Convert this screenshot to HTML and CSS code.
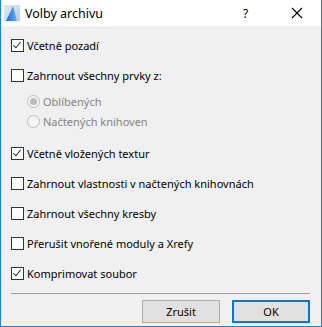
FILE: index.html
```html
<!DOCTYPE html>
<html lang="cs">
<head>
<meta charset="UTF-8">
<title>Volby archivu</title>
<link rel="stylesheet" href="styles.css">
</head>
<body>
<div class="dialog">
  <div class="titlebar">
    <svg class="app-icon" width="16" height="16" viewBox="0 0 16 16">
      <defs>
        <linearGradient id="bg" x1="0" y1="0" x2="1" y2="1">
          <stop offset="0" stop-color="#dfe9f6"/>
          <stop offset="1" stop-color="#b9cde6"/>
        </linearGradient>
        <linearGradient id="sail" x1="0" y1="0" x2="1" y2="0">
          <stop offset="0" stop-color="#1c6fd8"/>
          <stop offset="1" stop-color="#6aa8f0"/>
        </linearGradient>
      </defs>
      <rect x="0" y="0" width="16" height="16" fill="url(#bg)"/>
      <path d="M2 16 L9 1 L13 16 Z" fill="url(#sail)"/>
    </svg>
    <span class="title">Volby archivu</span>
    <span class="help">?</span>
    <svg class="close" width="12" height="12" viewBox="0 0 12 12">
      <path d="M1 1 L11 11 M11 1 L1 11" stroke="#000" stroke-width="1.1"/>
    </svg>
  </div>

  <div class="content">
    <label class="row r-first"><span class="box checked"></span>Včetně pozadí</label>
    <label class="row r-group"><span class="box"></span>Zahrnout všechny prvky z:</label>
    <div class="radios">
      <label class="radio-row"><span class="radio on"></span>Oblíbených</label>
      <label class="radio-row"><span class="radio"></span>Načtených knihoven</label>
    </div>
    <label class="row r-after"><span class="box checked"></span>Včetně vložených textur</label>
    <label class="row"><span class="box"></span>Zahrnout vlastnosti v načtených knihovnách</label>
    <label class="row"><span class="box"></span>Zahrnout všechny kresby</label>
    <label class="row"><span class="box"></span>Přerušit vnořené moduly a Xrefy</label>
    <label class="row"><span class="box checked"></span>Komprimovat soubor</label>

    <div class="separator"></div>

    <div class="buttons">
      <button class="btn">Zrušit</button>
      <button class="btn default">OK</button>
    </div>
  </div>
</div>
</body>
</html>
```

FILE: styles.css
```css
body {
  margin: 0;
  padding: 0;
  font-family: 'Noto Sans', 'Open Sans', sans-serif;
  font-size: 11px;
  color: #000;
}

.dialog {
  width: 322px;
  height: 327px;
  box-sizing: border-box;
  border: 1px solid #1883d7;
  border-top: none;
  background: #f0f0f0;
  display: flex;
  flex-direction: column;
}

.titlebar {
  height: 26px;
  background: #fff;
  display: flex;
  align-items: center;
  padding: 0 0 0 3px;
}

.app-icon {
  margin-right: 5px;
  margin-top: -1px;
}

.title {
  flex: 1;
  font-size: 12.5px;
}

.help {
  width: 14px;
  margin-right: 34px;
  font-size: 12px;
}

.close {
  margin-right: 18px;
}

.content {
  padding: 13px 10px 0 10px;
  display: flex;
  flex-direction: column;
}

.row {
  display: flex;
  align-items: center;
  height: 13px;
  line-height: 13px;
  margin-top: 17px;
  white-space: nowrap;
}

.r-first {
  margin-top: 0;
}

.r-after {
  margin-top: 19px;
}

.box {
  width: 13px;
  height: 13px;
  box-sizing: border-box;
  border: 1px solid #333;
  background: #fff;
  margin-right: 3px;
  position: relative;
  flex: none;
}

.box.checked::after {
  content: "";
  position: absolute;
  left: 3px;
  top: 0px;
  width: 3px;
  height: 7px;
  border: solid #333;
  border-width: 0 1.5px 1.5px 0;
  transform: rotate(40deg);
}

.radios {
  display: flex;
  flex-direction: column;
  gap: 7px;
  margin-top: 13px;
  padding-left: 16px;
}

.radio-row {
  display: flex;
  align-items: center;
  height: 13px;
  color: #838383;
}

.radio {
  width: 13px;
  height: 13px;
  box-sizing: border-box;
  border: 1px solid #bcbcbc;
  border-radius: 50%;
  background: #f4f4f4;
  margin-right: 3px;
  position: relative;
}

.radio.on::after {
  content: "";
  position: absolute;
  left: 2px;
  top: 2px;
  width: 7px;
  height: 7px;
  border-radius: 50%;
  background: #bcbcbc;
}

.separator {
  height: 1px;
  background: #a0a0a0;
  margin-top: 13px;
  margin-right: 1px;
}

.buttons {
  display: flex;
  justify-content: flex-end;
  gap: 12px;
  margin-top: 6px;
  margin-right: 1px;
}

.btn {
  width: 78px;
  height: 23px;
  box-sizing: border-box;
  border: 1px solid #adadad;
  background: #e1e1e1;
  font-family: inherit;
  font-size: 11px;
  padding: 0;
  color: #000;
}

.btn.default {
  border: 2px solid #0078d7;
}
```
